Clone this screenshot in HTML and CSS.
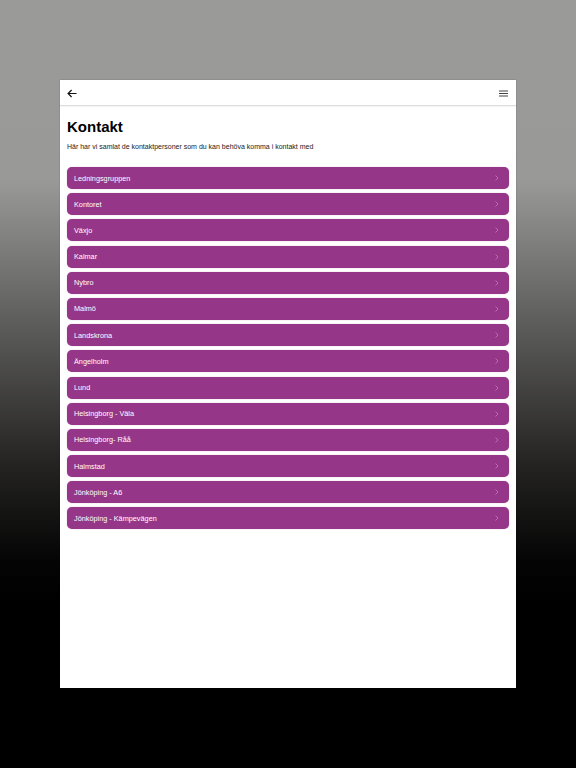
FILE: index.html
```html
<!DOCTYPE html>
<html lang="sv">
<head>
<meta charset="utf-8">
<link rel="stylesheet" href="styles.css">
</head>
<body>
<div class="card">
  <header class="topbar">
    <svg class="icon-back" width="10" height="9" viewBox="0 0 10 9"><path d="M9.5 4.5H1.2M4.6 1L1.1 4.5L4.6 8" fill="none" stroke="#111" stroke-width="1.2"/></svg>
    <svg class="icon-menu" width="9" height="7" viewBox="0 0 9 7"><path d="M0 1H9M0 3.5H9M0 6H9" stroke="#444" stroke-width="1"/></svg>
  </header>
  <main class="content">
    <h1 class="title">Kontakt</h1>
    <p class="subtitle">Här har vi samlat de kontaktpersoner som du kan behöva komma i kontakt med</p>
    <ul class="list">
      <li class="item"><span>Ledningsgruppen</span><svg class="chev" width="4" height="6" viewBox="0 0 4 6"><path d="M0.5 0.5L3 3L0.5 5.5" fill="none" stroke="currentColor" stroke-width="0.8"/></svg></li>
      <li class="item"><span>Kontoret</span><svg class="chev" width="4" height="6" viewBox="0 0 4 6"><path d="M0.5 0.5L3 3L0.5 5.5" fill="none" stroke="currentColor" stroke-width="0.8"/></svg></li>
      <li class="item"><span>Växjo</span><svg class="chev" width="4" height="6" viewBox="0 0 4 6"><path d="M0.5 0.5L3 3L0.5 5.5" fill="none" stroke="currentColor" stroke-width="0.8"/></svg></li>
      <li class="item"><span>Kalmar</span><svg class="chev" width="4" height="6" viewBox="0 0 4 6"><path d="M0.5 0.5L3 3L0.5 5.5" fill="none" stroke="currentColor" stroke-width="0.8"/></svg></li>
      <li class="item"><span>Nybro</span><svg class="chev" width="4" height="6" viewBox="0 0 4 6"><path d="M0.5 0.5L3 3L0.5 5.5" fill="none" stroke="currentColor" stroke-width="0.8"/></svg></li>
      <li class="item"><span>Malmö</span><svg class="chev" width="4" height="6" viewBox="0 0 4 6"><path d="M0.5 0.5L3 3L0.5 5.5" fill="none" stroke="currentColor" stroke-width="0.8"/></svg></li>
      <li class="item"><span>Landskrona</span><svg class="chev" width="4" height="6" viewBox="0 0 4 6"><path d="M0.5 0.5L3 3L0.5 5.5" fill="none" stroke="currentColor" stroke-width="0.8"/></svg></li>
      <li class="item"><span>Ängelholm</span><svg class="chev" width="4" height="6" viewBox="0 0 4 6"><path d="M0.5 0.5L3 3L0.5 5.5" fill="none" stroke="currentColor" stroke-width="0.8"/></svg></li>
      <li class="item"><span>Lund</span><svg class="chev" width="4" height="6" viewBox="0 0 4 6"><path d="M0.5 0.5L3 3L0.5 5.5" fill="none" stroke="currentColor" stroke-width="0.8"/></svg></li>
      <li class="item"><span>Helsingborg - Väla</span><svg class="chev" width="4" height="6" viewBox="0 0 4 6"><path d="M0.5 0.5L3 3L0.5 5.5" fill="none" stroke="currentColor" stroke-width="0.8"/></svg></li>
      <li class="item"><span>Helsingborg- Råå</span><svg class="chev" width="4" height="6" viewBox="0 0 4 6"><path d="M0.5 0.5L3 3L0.5 5.5" fill="none" stroke="currentColor" stroke-width="0.8"/></svg></li>
      <li class="item"><span>Halmstad</span><svg class="chev" width="4" height="6" viewBox="0 0 4 6"><path d="M0.5 0.5L3 3L0.5 5.5" fill="none" stroke="currentColor" stroke-width="0.8"/></svg></li>
      <li class="item"><span>Jönköping - A6</span><svg class="chev" width="4" height="6" viewBox="0 0 4 6"><path d="M0.5 0.5L3 3L0.5 5.5" fill="none" stroke="currentColor" stroke-width="0.8"/></svg></li>
      <li class="item"><span>Jönköping - Kämpevägen</span><svg class="chev" width="4" height="6" viewBox="0 0 4 6"><path d="M0.5 0.5L3 3L0.5 5.5" fill="none" stroke="currentColor" stroke-width="0.8"/></svg></li>
    </ul>
  </main>
</div>
</body>
</html>
```
FILE: styles.css
```css
html, body {
  margin: 0;
  padding: 0;
}
body {
  width: 576px;
  height: 768px;
  overflow: hidden;
  font-family: "Liberation Sans", Arial, sans-serif;
  background: linear-gradient(to bottom, #9a9a98 0px, #999997 180px, #5a5a59 330px, #262524 460px, #050505 560px, #000 600px);
  padding-top: 80px;
  box-sizing: border-box;
}
.card {
  width: 456px;
  height: 608px;
  margin: 0 auto;
  background: #fff;
  box-shadow: 0 0 1px rgba(0,0,0,0.4);
}
.topbar {
  height: 25px;
  border-bottom: 1px solid #dcdcdc;
  display: flex;
  align-items: center;
  justify-content: space-between;
  padding: 0 8px 0 7px;
  box-shadow: 0 1px 1px rgba(0,0,0,0.04);
}
.icon-back { display: block; margin-top: 1px; }
.icon-menu { display: block; margin-top: 1px; }
.content {
  padding: 12px 7px 0 7px;
}
.title {
  margin: 0;
  font-size: 15px;
  line-height: 18px;
  font-weight: bold;
  color: #000;
}
.subtitle {
  margin: 6px 0 0 0;
  font-size: 7px;
  line-height: 9px;
  color: #222;
}
.list {
  list-style: none;
  margin: 16px 0 0 0;
  padding: 0;
  display: flex;
  flex-direction: column;
  gap: 4.2px;
}
.item {
  height: 22px;
  border-radius: 5px;
  background: #953689;
  color: #fff;
  font-size: 7.3px;
  display: flex;
  align-items: center;
  justify-content: space-between;
  padding: 0 10px 0 7px;
  box-shadow: 0 0 1px rgba(149,54,137,0.6);
}
.chev {
  color: #c27ab8;
  display: block;
}
```
